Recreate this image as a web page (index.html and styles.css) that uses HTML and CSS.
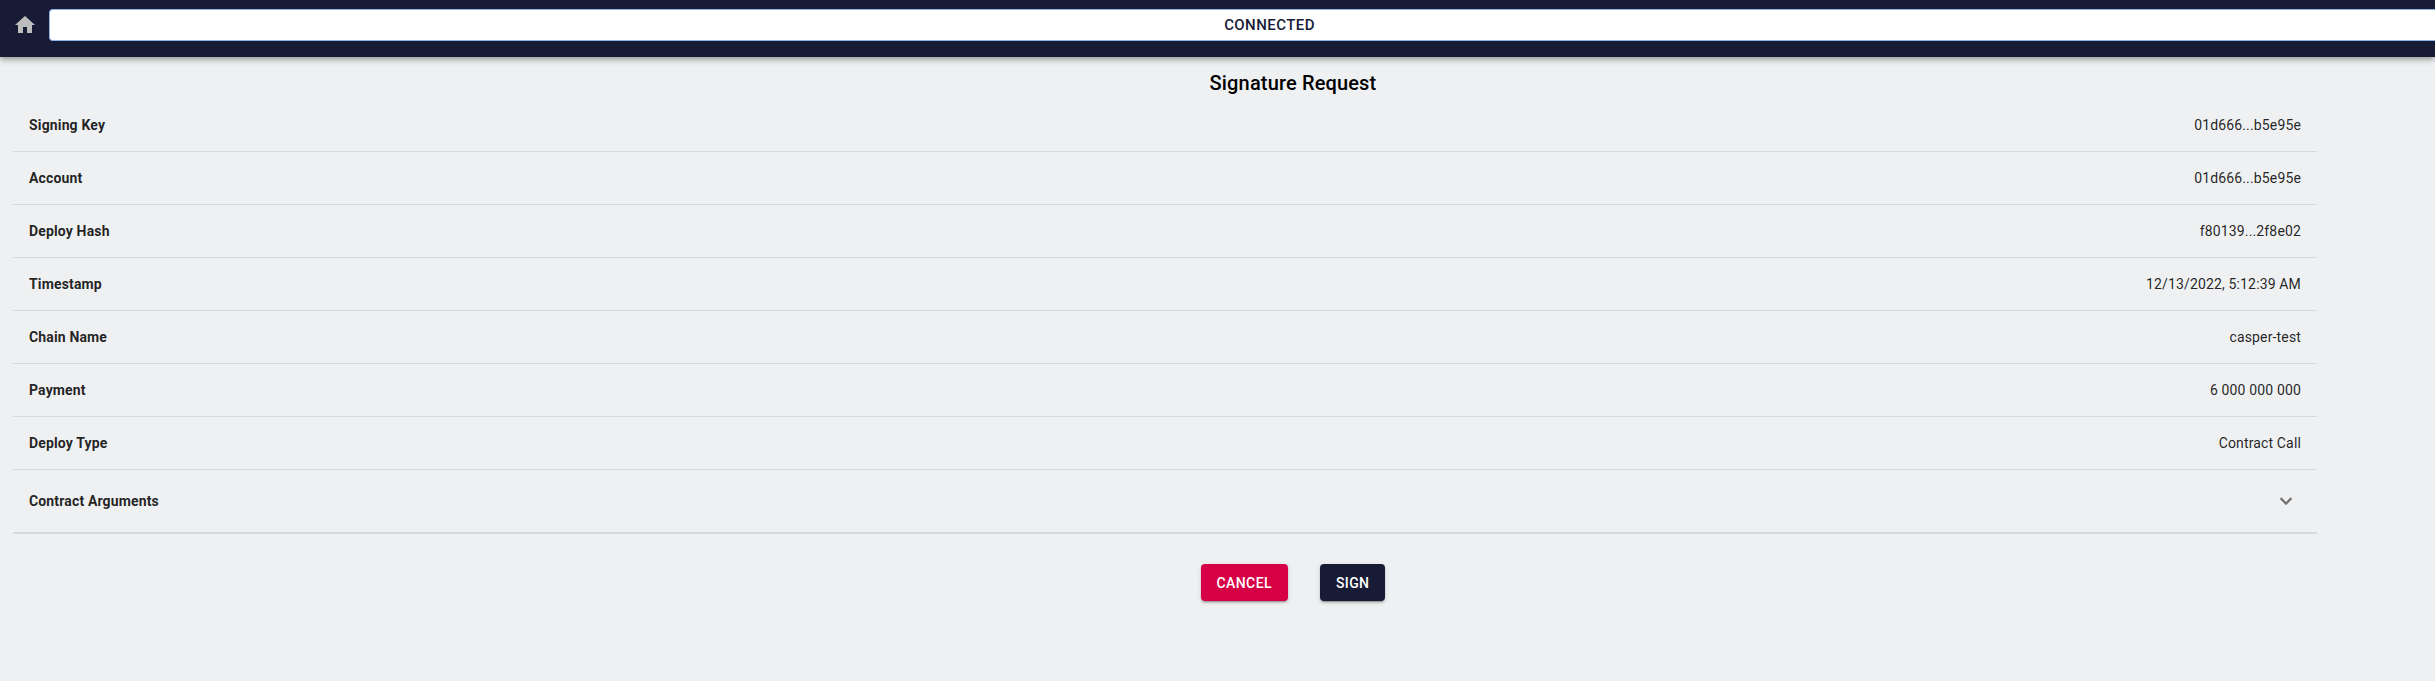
FILE: index.html
```html
<!DOCTYPE html>
<html lang="en">
<head>
<meta charset="utf-8">
<title>Signature Request</title>
<link rel="stylesheet" href="styles.css">
</head>
<body>
<header class="bar">
  <svg class="home" viewBox="0 0 24 24"><path d="M10 20v-6h4v6h5v-8h3L12 3 2 12h3v8z"/></svg>
  <button class="status">CONNECTED</button>
</header>
<main>
  <h1 class="title">Signature Request</h1>
  <dl class="table">
    <div class="row"><dt>Signing Key</dt><dd>01d666...b5e95e</dd></div>
    <div class="row"><dt>Account</dt><dd>01d666...b5e95e</dd></div>
    <div class="row"><dt>Deploy Hash</dt><dd>f80139...2f8e02</dd></div>
    <div class="row"><dt>Timestamp</dt><dd>12/13/2022, 5:12:39 AM</dd></div>
    <div class="row"><dt>Chain Name</dt><dd>casper-test</dd></div>
    <div class="row"><dt>Payment</dt><dd>6 000 000 000</dd></div>
    <div class="row"><dt>Deploy Type</dt><dd>Contract Call</dd></div>
    <div class="row expand"><dt>Contract Arguments</dt><dd><svg class="chevron" viewBox="0 0 24 24"><path d="M7.41 8.59 12 13.17l4.59-4.58L18 10l-6 6-6-6 1.41-1.41z"/></svg></dd></div>
  </dl>
  <div class="actions">
    <button class="btn cancel">CANCEL</button>
    <button class="btn sign">SIGN</button>
  </div>
</main>
</body>
</html>
```
FILE: styles.css
```css
* { box-sizing: border-box; }
body { margin: 0; height: 681px; overflow: hidden; background: #eff0f2; font-family: Roboto, "Liberation Sans", sans-serif; color: rgba(0,0,0,.87); }
.bar { height: 57px; padding: 9px 0 0 13px; display: flex; align-items: flex-start; background: #181b36; box-shadow: 0 2px 4px -1px rgba(0,0,0,.2), 0 4px 5px rgba(0,0,0,.14), 0 1px 10px rgba(0,0,0,.12); }
.home { width: 24px; height: 32px; fill: #bdbdbd; flex: none; }
.status { flex: 1; height: 32px; margin-left: 12px; padding: 0 0 0 54px; border: 1px solid #8fb4e8; border-right: 0; border-radius: 4px 0 0 4px; background: #fff; color: #181b36; font: 500 15px/24px Roboto, sans-serif; letter-spacing: .43px; }
.title { margin: 14px 0 0; padding-left: 151px; text-align: center; font: 500 20px/24px Roboto, sans-serif; letter-spacing: .15px; color: #000; }
.table { margin: 4px 0 0 13px; width: 2304px; font-size: 14px; line-height: 20px; letter-spacing: .15px; }
.row { display: flex; justify-content: space-between; align-items: center; height: 53px; padding: 0 16px; border-bottom: 1px solid #d8d9db; }
.row dt { font-weight: 700; }
.row dd { margin: 0; }
.expand { height: 64px; border-bottom-width: 2px; }
.chevron { width: 24px; height: 24px; display: block; margin-right: 3px; fill: #737373; stroke: #737373; stroke-width: .4; }
.actions { margin-top: 30px; padding-left: 151px; display: flex; justify-content: center; gap: 32px; }
.btn { height: 37px; padding: 0 16px; border: 0; border-radius: 4px; color: #fff; font: 500 14px/24px Roboto, sans-serif; letter-spacing: .4px; box-shadow: 0 3px 1px -2px rgba(0,0,0,.2), 0 2px 2px rgba(0,0,0,.14), 0 1px 5px rgba(0,0,0,.12); }
.cancel { background: #d60046; }
.sign { background: #181b36; }
```
